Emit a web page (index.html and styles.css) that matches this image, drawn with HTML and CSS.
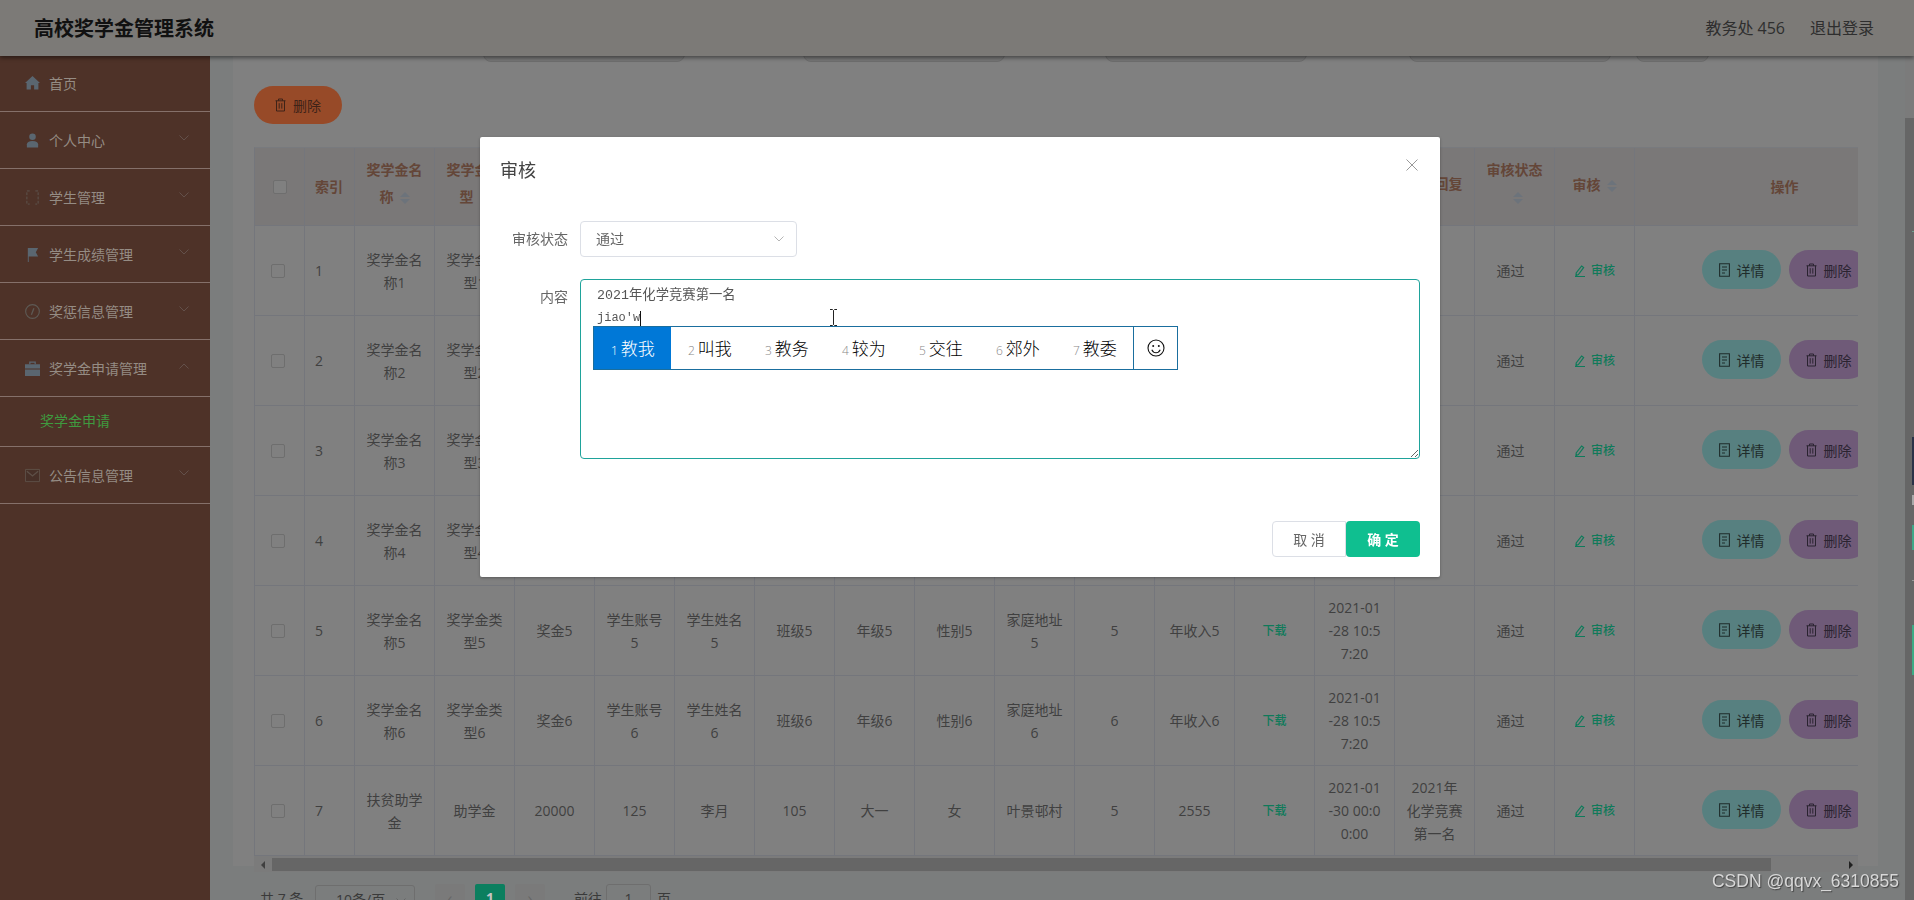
FILE: index.html
```html
<!DOCTYPE html>
<html lang="zh-CN">
<head>
    <meta charset="UTF-8">
    <title>高校奖学金管理系统</title>
    <link rel="stylesheet" href="styles.css">
</head>
<body>
    <svg class="icon-defs" width="0" height="0">
        <symbol id="i-trash" viewBox="0 0 11 14"><path d="M.5 2.800h10M3.500 2.800V1h4v1.800M1.500 2.800v10.200h8V2.800M4.200 5.200v5.400M6.800 5.200v5.400" fill="none" stroke="currentColor" stroke-width="1"/></symbol>
        <symbol id="i-doc" viewBox="0 0 11 14"><path d="M.6.800h9.800v12.400H.6zM3 4h5M3 7h5M3 10h3" fill="none" stroke="currentColor" stroke-width="1.100"/></symbol>
        <symbol id="i-edit" viewBox="0 0 12 12"><path d="M7.600 1L9.600 2.600 4.400 9.600 2 10.600 2.200 8zM1 11.500h10" fill="none" stroke="currentColor" stroke-width="1.200"/></symbol>
        <symbol id="i-down" viewBox="0 0 10 6"><path d="M.5.500L5 5 9.500.500" fill="none" stroke="currentColor" stroke-width="1"/></symbol>
        <symbol id="i-up" viewBox="0 0 10 6"><path d="M.5 5.500L5 1 9.500 5.500" fill="none" stroke="currentColor" stroke-width="1"/></symbol>
    </svg>

    <header class="topbar">
        <div class="brand">高校奖学金管理系统</div>
        <div class="user-links">
            <span>教务处 456</span>
            <span>退出登录</span>
        </div>
    </header>

    <div class="layout">
        <aside class="sidebar">
            <div class="menu-item">
                <svg class="menu-icon" viewBox="0 0 14 14"><path d="M7 1L0 7.500h1.500V13.500h4V9.500h3v4h4V7.500H14z" fill="#5a6670"/></svg>
                <span>首页</span>
            </div>
            <div class="menu-item">
                <svg class="menu-icon" viewBox="0 0 14 16"><circle cx="7" cy="4" r="3.500" fill="#5a6670"/><path d="M1 15.500v-3.500c0-2 2-3.500 6-3.500s6 1.500 6 3.500v3.500z" fill="#5a6670"/></svg>
                <span>个人中心</span>
                <svg class="chevron"><use href="#i-down"/></svg>
            </div>
            <div class="menu-item">
                <svg class="menu-icon" viewBox="0 0 14 16"><path d="M4 1H1v14h3M10 1h3v14h-3" fill="none" stroke="#5e5550" stroke-width="1" stroke-dasharray="3 1.500"/></svg>
                <span>学生管理</span>
                <svg class="chevron"><use href="#i-down"/></svg>
            </div>
            <div class="menu-item">
                <svg class="menu-icon" viewBox="0 0 14 16"><path d="M2 1h11l-2.500 4.500L13 10H3v6H2z" fill="#5a6670"/></svg>
                <span>学生成绩管理</span>
                <svg class="chevron"><use href="#i-down"/></svg>
            </div>
            <div class="menu-item">
                <svg class="menu-icon" viewBox="0 0 16 16"><circle cx="8" cy="8" r="7.300" fill="none" stroke="#5e5a55" stroke-width="1.200"/><path d="M9.500 4.500L6.800 11.500" stroke="#5e5a55" stroke-width="1.400"/></svg>
                <span>奖惩信息管理</span>
                <svg class="chevron"><use href="#i-down"/></svg>
            </div>
            <div class="menu-item">
                <svg class="menu-icon" viewBox="0 0 14 14"><path d="M4.500 3V1h5v2" fill="none" stroke="#5a6670" stroke-width="1.200"/><path d="M0 3h14v4H0zM0 8h14v6H0z" fill="#5a6670"/></svg>
                <span>奖学金申请管理</span>
                <svg class="chevron"><use href="#i-up"/></svg>
            </div>
            <div class="submenu">奖学金申请</div>
            <div class="menu-item">
                <svg class="menu-icon" viewBox="0 0 16 14"><path d="M.5.500h15v13H.5z" fill="#473028" stroke="#5e5048"/><path d="M2 2.500l6 5 6-5" fill="none" stroke="#5e5048" stroke-width="1.400"/></svg>
                <span>公告信息管理</span>
                <svg class="chevron"><use href="#i-down"/></svg>
            </div>
        </aside>

        <main class="main">
            <div class="panel">
                <div class="search-row">
                    <div class="search-input"></div>
                    <div class="search-input"></div>
                    <div class="search-input"></div>
                    <div class="search-input"></div>
                    <div class="search-input short"></div>
                </div>

                <button class="btn-round btn-remove"><svg class="btn-icon"><use href="#i-trash"/></svg>删除</button>

                <div class="table-wrap">
                    <table class="data-table">
                        <colgroup>
                            <col class="c-50"><col class="c-50">
                            <col class="c-80"><col class="c-80"><col class="c-80"><col class="c-80"><col class="c-80"><col class="c-80"><col class="c-80"><col class="c-80">
                            <col class="c-80"><col class="c-80"><col class="c-80"><col class="c-80"><col class="c-80"><col class="c-80"><col class="c-80"><col class="c-80">
                            <col class="c-300">
                        </colgroup>
                        <thead>
                            <tr>
                                <th class="left"><span class="check head-check"></span></th>
                                <th class="left">索引</th>
                                <th class="head-wrap">奖学金名称<i class="sort"></i></th>
                                <th class="head-wrap">奖学金类型<i class="sort"></i></th>
                                <th>奖金</th>
                                <th>学生账号</th>
                                <th>学生姓名</th>
                                <th>班级</th>
                                <th>年级</th>
                                <th>性别</th>
                                <th>家庭地址</th>
                                <th>家庭人数</th>
                                <th>年收入</th>
                                <th>材料</th>
                                <th>申请时间</th>
                                <th class="head-wrap">审核回复</th>
                                <th class="head-wrap">审核状态<i class="sort"></i></th>
                                <th class="head-sort">审核<i class="sort"></i></th>
                                <th>操作</th>
                            </tr>
                        </thead>
                        <tbody>
                            <tr>
                                <td class="left"><span class="check"></span></td><td class="left">1</td>
                                <td>奖学金名称1</td><td>奖学金类型1</td><td>奖金1</td><td>学生账号1</td><td>学生姓名1</td><td>班级1</td><td>年级1</td><td>性别1</td><td>家庭地址1</td><td>1</td><td>年收入1</td>
                                <td class="link">下载</td><td>2021-01<br>-28 10:5<br>7:20</td><td></td><td class="status">通过</td>
                                <td class="link"><svg class="edit-icon"><use href="#i-edit"/></svg>审核</td>
                                <td class="ops"><div class="ops-row"><button class="btn-round btn-detail"><svg class="btn-icon"><use href="#i-doc"/></svg>详情</button><button class="btn-round btn-del"><svg class="btn-icon"><use href="#i-trash"/></svg>删除</button></div></td>
                            </tr>
                            <tr>
                                <td class="left"><span class="check"></span></td><td class="left">2</td>
                                <td>奖学金名称2</td><td>奖学金类型2</td><td>奖金2</td><td>学生账号2</td><td>学生姓名2</td><td>班级2</td><td>年级2</td><td>性别2</td><td>家庭地址2</td><td>2</td><td>年收入2</td>
                                <td class="link">下载</td><td>2021-01<br>-28 10:5<br>7:20</td><td></td><td class="status">通过</td>
                                <td class="link"><svg class="edit-icon"><use href="#i-edit"/></svg>审核</td>
                                <td class="ops"><div class="ops-row"><button class="btn-round btn-detail"><svg class="btn-icon"><use href="#i-doc"/></svg>详情</button><button class="btn-round btn-del"><svg class="btn-icon"><use href="#i-trash"/></svg>删除</button></div></td>
                            </tr>
                            <tr>
                                <td class="left"><span class="check"></span></td><td class="left">3</td>
                                <td>奖学金名称3</td><td>奖学金类型3</td><td>奖金3</td><td>学生账号3</td><td>学生姓名3</td><td>班级3</td><td>年级3</td><td>性别3</td><td>家庭地址3</td><td>3</td><td>年收入3</td>
                                <td class="link">下载</td><td>2021-01<br>-28 10:5<br>7:20</td><td></td><td class="status">通过</td>
                                <td class="link"><svg class="edit-icon"><use href="#i-edit"/></svg>审核</td>
                                <td class="ops"><div class="ops-row"><button class="btn-round btn-detail"><svg class="btn-icon"><use href="#i-doc"/></svg>详情</button><button class="btn-round btn-del"><svg class="btn-icon"><use href="#i-trash"/></svg>删除</button></div></td>
                            </tr>
                            <tr>
                                <td class="left"><span class="check"></span></td><td class="left">4</td>
                                <td>奖学金名称4</td><td>奖学金类型4</td><td>奖金4</td><td>学生账号4</td><td>学生姓名4</td><td>班级4</td><td>年级4</td><td>性别4</td><td>家庭地址4</td><td>4</td><td>年收入4</td>
                                <td class="link">下载</td><td>2021-01<br>-28 10:5<br>7:20</td><td></td><td class="status">通过</td>
                                <td class="link"><svg class="edit-icon"><use href="#i-edit"/></svg>审核</td>
                                <td class="ops"><div class="ops-row"><button class="btn-round btn-detail"><svg class="btn-icon"><use href="#i-doc"/></svg>详情</button><button class="btn-round btn-del"><svg class="btn-icon"><use href="#i-trash"/></svg>删除</button></div></td>
                            </tr>
                            <tr>
                                <td class="left"><span class="check"></span></td><td class="left">5</td>
                                <td>奖学金名称5</td><td>奖学金类型5</td><td>奖金5</td><td>学生账号5</td><td>学生姓名5</td><td>班级5</td><td>年级5</td><td>性别5</td><td>家庭地址5</td><td>5</td><td>年收入5</td>
                                <td class="link">下载</td><td>2021-01<br>-28 10:5<br>7:20</td><td></td><td class="status">通过</td>
                                <td class="link"><svg class="edit-icon"><use href="#i-edit"/></svg>审核</td>
                                <td class="ops"><div class="ops-row"><button class="btn-round btn-detail"><svg class="btn-icon"><use href="#i-doc"/></svg>详情</button><button class="btn-round btn-del"><svg class="btn-icon"><use href="#i-trash"/></svg>删除</button></div></td>
                            </tr>
                            <tr>
                                <td class="left"><span class="check"></span></td><td class="left">6</td>
                                <td>奖学金名称6</td><td>奖学金类型6</td><td>奖金6</td><td>学生账号6</td><td>学生姓名6</td><td>班级6</td><td>年级6</td><td>性别6</td><td>家庭地址6</td><td>6</td><td>年收入6</td>
                                <td class="link">下载</td><td>2021-01<br>-28 10:5<br>7:20</td><td></td><td class="status">通过</td>
                                <td class="link"><svg class="edit-icon"><use href="#i-edit"/></svg>审核</td>
                                <td class="ops"><div class="ops-row"><button class="btn-round btn-detail"><svg class="btn-icon"><use href="#i-doc"/></svg>详情</button><button class="btn-round btn-del"><svg class="btn-icon"><use href="#i-trash"/></svg>删除</button></div></td>
                            </tr>
                            <tr>
                                <td class="left"><span class="check"></span></td><td class="left">7</td>
                                <td>扶贫助学金</td><td>助学金</td><td>20000</td><td>125</td><td>李月</td><td>105</td><td>大一</td><td>女</td><td>叶景邨村</td><td>5</td><td>2555</td>
                                <td class="link">下载</td><td>2021-01<br>-30 00:0<br>0:00</td><td>2021年化学竞赛第一名</td><td class="status">通过</td>
                                <td class="link"><svg class="edit-icon"><use href="#i-edit"/></svg>审核</td>
                                <td class="ops"><div class="ops-row"><button class="btn-round btn-detail"><svg class="btn-icon"><use href="#i-doc"/></svg>详情</button><button class="btn-round btn-del"><svg class="btn-icon"><use href="#i-trash"/></svg>删除</button></div></td>
                            </tr>
                        </tbody>
                    </table>
                </div>

                <div class="h-scroll">
                    <i class="arrow-left"></i>
                    <div class="h-thumb"></div>
                    <i class="arrow-right"></i>
                </div>

                <div class="pager">
                    <span class="pager-total">共 7 条</span>
                    <div class="pager-size">10条/页<svg class="pager-chevron"><use href="#i-down"/></svg></div>
                    <div class="pager-btn">&lsaquo;</div>
                    <div class="pager-btn active">1</div>
                    <div class="pager-btn">&rsaquo;</div>
                    <span class="pager-goto">前往</span>
                    <div class="pager-input">1</div>
                    <span>页</span>
                </div>
            </div>
        </main>

        <div class="v-scroll">
            <div class="v-thumb"></div>
            <div class="behind-edge"></div>
        </div>
    </div>

    <div class="dialog-wrap">
        <div class="dialog">
            <div class="dialog-head">
                <span class="dialog-title">审核</span>
                <svg class="dialog-close" viewBox="0 0 12 12"><path d="M.5.500l11 11M11.500.500l-11 11" stroke="#999" stroke-width="1"/></svg>
            </div>
            <div class="form-row">
                <label class="form-label">审核状态</label>
                <div class="select">通过<svg class="select-chevron"><use href="#i-down"/></svg></div>
            </div>
            <div class="form-row area-row">
                <label class="form-label">内容</label>
                <div class="area-wrap">
                    <div class="text-box">2021年化学竞赛第一名<br><span class="composing">jiao'w</span></div>
                    <div class="ime">
                        <div class="ime-item selected"><small>1</small>教我</div>
                        <div class="ime-item"><small>2</small>叫我</div>
                        <div class="ime-item"><small>3</small>教务</div>
                        <div class="ime-item"><small>4</small>较为</div>
                        <div class="ime-item"><small>5</small>交往</div>
                        <div class="ime-item"><small>6</small>郊外</div>
                        <div class="ime-item"><small>7</small>教委</div>
                        <div class="ime-emoji">
                            <svg width="18" height="18" viewBox="0 0 18 18"><circle cx="9" cy="9" r="8" fill="none" stroke="#111" stroke-width="1.100"/><circle cx="6.200" cy="7" r="1" fill="#111"/><circle cx="11.800" cy="7" r="1" fill="#111"/><path d="M4.800 10.800c1 2.200 2.600 3 4.200 3s3.200-.8 4.200-3" fill="none" stroke="#111" stroke-width="1.100"/></svg>
                        </div>
                    </div>
                    <svg class="ibeam" width="9" height="17" viewBox="0 0 9 17"><path d="M1 .5h2.500L4.500 1.500 5.500.5H8M4.500 1.500v14M1 16.500h2.500l1-1 1 1H8" fill="none" stroke="#222" stroke-width="1"/></svg>
                </div>
            </div>
            <div class="dialog-foot">
                <button class="btn-cancel">取 消</button>
                <button class="btn-ok">确 定</button>
            </div>
        </div>
    </div>

    <div class="watermark">CSDN @qqvx_6310855</div>
</body>
</html>
```
FILE: styles.css
```css
body {
    margin: 0;
    height: 100vh;
    overflow: hidden;
    background: #808080;
    color: #404040;
    font-family: "Open Sans", "Noto Sans CJK SC", sans-serif;
    font-size: 14px;
}

button {
    font-family: inherit;
    border: none;
    padding: 0;
}

.icon-defs {
    display: block;
    height: 0;
}

/* top bar */
.topbar {
    position: relative;
    z-index: 2;
    height: 56px;
    display: flex;
    justify-content: space-between;
    align-items: center;
    padding: 0 40px 2px 34px;
    box-sizing: border-box;
    background: #7c7a77;
    box-shadow: 0 2px 4px rgba(0,0,0,0.45);
}

.brand {
    font-size: 20px;
    font-weight: bold;
    color: #111;
}

.user-links {
    display: flex;
    gap: 25px;
    font-size: 16px;
    color: #2e2e2e;
}

.layout {
    display: flex;
    height: 844px;
}

/* sidebar */
.sidebar {
    width: 210px;
    flex-shrink: 0;
    background: #4e3228;
    color: #958c84;
}

.menu-item {
    position: relative;
    height: 57px;
    display: flex;
    align-items: center;
    box-sizing: border-box;
    padding: 0 0 0 25px;
    border-bottom: 1px solid #85706a;
}

.menu-item:first-child {
    height: 56px;
    padding-bottom: 2px;
}

.menu-icon {
    width: 15px;
    height: 15px;
    margin-right: 9px;
    flex-shrink: 0;
}

.chevron {
    position: absolute;
    left: 179px;
    top: 23px;
    width: 10px;
    height: 6px;
    color: #63504a;
}

.submenu {
    height: 50px;
    line-height: 48px;
    padding-left: 40px;
    box-sizing: border-box;
    color: #3f9a3f;
    border-bottom: 1px solid #85706a;
}

/* main content */
.main {
    flex: 1;
    min-width: 0;
    overflow: hidden;
    background: #7b7d7d;
    padding: 0 27px 0 23px;
}

.panel {
    height: 100%;
    background: #808080;
    padding: 0 20px 0 21px;
}

.search-row {
    display: flex;
    height: 40px;
    margin-top: -34px;
    padding-left: 229px;
    margin-bottom: 24px;
}

.search-input {
    width: 202px;
    box-sizing: border-box;
    border: 1px solid #6e6e6e;
    border-radius: 8px;
    background: #777;
}

.search-input:nth-child(2) { margin-left: 118px; }
.search-input:nth-child(3) { margin-left: 100px; }
.search-input:nth-child(4) { margin-left: 102px; }

.search-input.short {
    width: 73px;
    margin-left: 25px;
}

.btn-round {
    height: 39px;
    border-radius: 20px;
    display: inline-flex;
    align-items: center;
    justify-content: center;
    gap: 7px;
    font-size: 14px;
    white-space: nowrap;
    flex-shrink: 0;
}

.btn-icon {
    width: 11px;
    height: 14px;
}

.btn-remove {
    width: 88px;
    height: 38px;
    background: #974a28;
    color: #3e2318;
    margin-bottom: 23px;
    display: flex;
}

.table-wrap {
    overflow: hidden;
    border-left: 1px solid #74767c;
    border-top: 1px solid #787a7e;
    height: 708px;
}

.data-table {
    width: 1680px;
    table-layout: fixed;
    border-collapse: separate;
    border-spacing: 0;
}

.c-50 { width: 50px; }
.c-80 { width: 80px; }
.c-300 { width: 300px; }

.data-table th,
.data-table td {
    box-sizing: border-box;
    padding: 0 10px;
    text-align: center;
    border-right: 1px solid #74767c;
    border-bottom: 1px solid #74767c;
}

.data-table th {
    height: 78px;
    line-height: 27px;
    background: #7a7878;
    color: #644638;
    font-weight: bold;
}

/* these headers sit a little above the middle of the row */
.data-table .head-wrap {
    padding-bottom: 7px;
}

.data-table .head-sort {
    padding-bottom: 4px;
}

.data-table td {
    height: 90px;
    line-height: 23px;
}

.data-table .left {
    text-align: left;
}

.check {
    display: block;
    width: 14px;
    height: 14px;
    box-sizing: border-box;
    border: 1px solid #6e6e6e;
    border-radius: 2px;
    margin-left: 6px;
}

.head-check {
    margin-left: 8px;
    background: #808080;
}

/* sort carets, drawn as css triangles */
.sort {
    display: inline-flex;
    flex-direction: column;
    gap: 2px;
    vertical-align: middle;
    margin-left: 6px;
}

.sort::before,
.sort::after {
    content: "";
    width: 0;
    height: 0;
    border-left: 5px solid transparent;
    border-right: 5px solid transparent;
}

.sort::before {
    border-bottom: 5px solid #6c737b;
}

.sort::after {
    border-top: 5px solid #6c737b;
}

.data-table .link {
    color: #0f7a5a;
    font-size: 12px;
    font-weight: 500;
}

.data-table .status {
    padding-right: 18px;
}

.edit-icon {
    width: 12px;
    height: 12px;
    margin-right: 5px;
    vertical-align: -2px;
}

.data-table .ops {
    padding: 0 0 2px 67px;
}

.ops-row {
    display: flex;
    gap: 8px;
}

.btn-detail {
    width: 79px;
    background: #578080;
    color: #1f2c2b;
}

.btn-del {
    width: 79px;
    background: #6f5a78;
    color: #2a2330;
}

/* horizontal scrollbar */
.h-scroll {
    height: 16px;
    box-sizing: border-box;
    padding: 2px 0 1px;
    display: flex;
    align-items: stretch;
    background: #7b7b7b;
}

.h-thumb {
    width: 1499px;
    background: #666;
}

.arrow-left,
.arrow-right {
    align-self: center;
    width: 0;
    height: 0;
    border-top: 4px solid transparent;
    border-bottom: 4px solid transparent;
}

.arrow-left {
    border-right: 4px solid #404040;
    margin: 0 7px;
}

.arrow-right {
    border-left: 4px solid #202020;
    margin-left: 78px;
}

/* pagination, cut off by the window */
.pager {
    display: flex;
    align-items: flex-start;
    height: 32px;
    margin-top: 13px;
    padding-left: 6px;
    line-height: 28px;
    color: #3a3a3a;
}

.pager-total {
    width: 55px;
}

.pager-size {
    position: relative;
    width: 100px;
    height: 32px;
    box-sizing: border-box;
    border: 1px solid #6e6e6e;
    border-radius: 3px;
    padding-left: 20px;
}

.pager-chevron {
    position: absolute;
    right: 8px;
    top: 12px;
    width: 10px;
    height: 6px;
    color: #666;
}

.pager-btn {
    width: 30px;
    height: 28px;
    margin-left: 10px;
    margin-top: -1px;
    text-align: center;
    font-size: 16px;
    background: #7a7a7a;
    color: #666;
    border-radius: 2px;
}

.pager-size + .pager-btn {
    margin-left: 20px;
}

.pager-btn.active {
    background: #0b7f5f;
    color: #c4c4c4;
    font-weight: bold;
    font-size: 14px;
}

.pager-goto {
    margin-left: 29px;
}

.pager-input {
    width: 45px;
    height: 28px;
    box-sizing: border-box;
    margin: -1px 6px 0 4px;
    border: 1px solid #6e6e6e;
    border-radius: 3px;
    text-align: center;
}

/* page scrollbar */
.v-scroll {
    position: relative;
    width: 9px;
    flex-shrink: 0;
    display: flex;
    flex-direction: column;
    padding-top: 62px;
    box-sizing: border-box;
    background: #7b7b7b;
}

.v-thumb {
    flex: 1;
    background: #666;
}

.behind-edge {
    position: absolute;
    right: 0;
    top: 0;
    bottom: 0;
    width: 2px;
    background: linear-gradient(to bottom,
        transparent 175px, #6f9f8f 175px, #6f9f8f 176px, transparent 176px,
        transparent 381px, #2a3248 381px, #2a3248 429px, transparent 429px,
        transparent 439px, #a8a8a8 439px, #a8a8a8 449px, transparent 449px,
        transparent 469px, #3fa888 469px, #3fa888 494px, transparent 494px,
        transparent 524px, #999 524px, #999 525px, transparent 525px,
        transparent 569px, #3dab85 569px, #3dab85 619px, transparent 619px);
}

/* dialog */
.dialog-wrap {
    position: fixed;
    z-index: 5;
    top: 137px;
    left: 480px;
}

.dialog {
    width: 960px;
    height: 440px;
    box-sizing: border-box;
    background: #fff;
    border-radius: 2px;
    box-shadow: 0 1px 3px rgba(0,0,0,0.3);
}

.dialog-head {
    position: relative;
    height: 84px;
    box-sizing: border-box;
    padding: 21px 20px 0;
}

.dialog-title {
    font-size: 18px;
    line-height: 24px;
    color: #444;
}

.dialog-close {
    position: absolute;
    top: 22px;
    right: 22px;
    width: 12px;
    height: 12px;
}

.form-row {
    display: flex;
    gap: 12px;
}

.area-row {
    margin-top: 22px;
}

.form-label {
    width: 88px;
    text-align: right;
    line-height: 36px;
    color: #666;
}

.select {
    position: relative;
    width: 217px;
    height: 36px;
    line-height: 34px;
    box-sizing: border-box;
    border: 1px solid #dcdfe6;
    border-radius: 4px;
    padding-left: 15px;
    color: #666;
}

.select-chevron {
    position: absolute;
    right: 12px;
    top: 14px;
    width: 10px;
    height: 6px;
    color: #b5b5b5;
}

.area-wrap {
    position: relative;
}

.text-box {
    width: 840px;
    height: 180px;
    box-sizing: border-box;
    padding: 5px 16px;
    border: 1px solid #1fa39b;
    border-radius: 4px;
    font-family: "Liberation Mono", "Noto Sans CJK SC", monospace;
    font-size: 13.33px;
    line-height: 22px;
    color: #555;
    overflow: auto;
    resize: both;
}

.composing {
    font-size: 12px;
    border-bottom: 1px dotted #333;
    border-right: 1px solid #111;
    padding-bottom: 1px;
}

.ime {
    position: absolute;
    left: 13px;
    top: 47px;
    display: flex;
    box-sizing: border-box;
    height: 44px;
    border: 1px solid #1a6e9e;
    background: #fff;
    font-family: "Noto Sans CJK SC", sans-serif;
    font-size: 17px;
    font-weight: 300;
    line-height: 41px;
    color: #000;
}

.ime-item {
    width: 77px;
    box-sizing: border-box;
    padding-left: 17px;
}

.ime-item small {
    font-family: "Open Sans", sans-serif;
    font-size: 12px;
    color: #888;
    margin-right: 3px;
}

.ime-item.selected {
    background: #0078d7;
    color: #fff;
}

.ime-item.selected small {
    color: #fff;
}

.ime-emoji {
    width: 44px;
    box-sizing: border-box;
    border-left: 1px solid #1a6e9e;
    display: flex;
    align-items: center;
    justify-content: center;
}

.ibeam {
    position: absolute;
    left: 249px;
    top: 30px;
}

.dialog-foot {
    display: flex;
    justify-content: flex-end;
    margin-top: 62px;
    padding-right: 20px;
}

.btn-cancel,
.btn-ok {
    width: 74px;
    height: 36px;
    font-size: 14px;
    border-radius: 4px;
}

.btn-cancel {
    background: #fff;
    border: 1px solid #dcdfe6;
    color: #666;
    border-radius: 4px 0 0 4px;
}

.btn-ok {
    width: 74px;
    background: #0fbf90;
    color: #fff;
    font-weight: bold;
}

.watermark {
    position: fixed;
    z-index: 6;
    right: 15px;
    bottom: 8px;
    font-family: "Liberation Sans", sans-serif;
    font-size: 17.5px;
    color: #d8d8d8;
    text-shadow: 1px 1px 1px #444;
}
```
